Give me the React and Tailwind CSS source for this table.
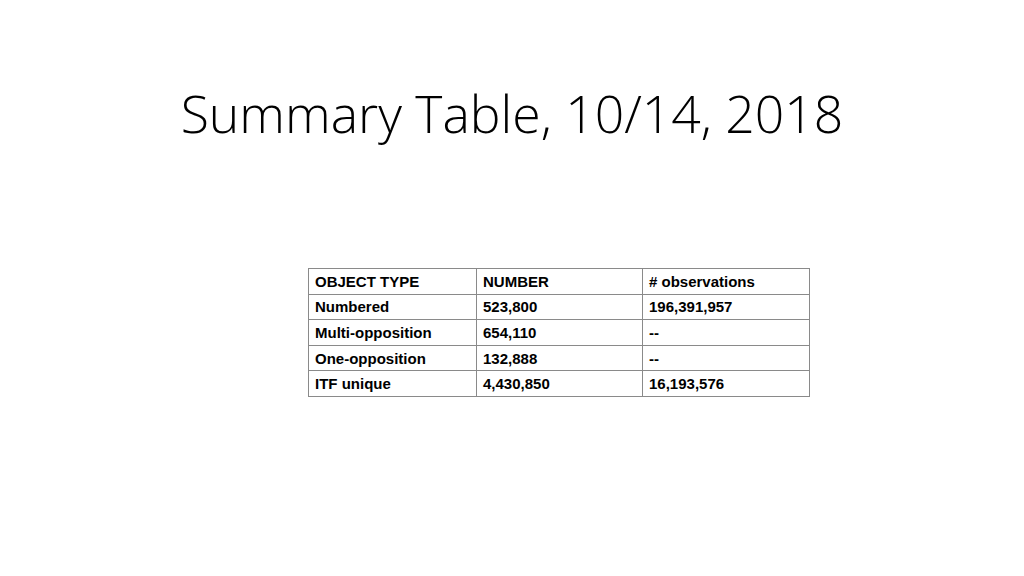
export default function App() {
  const rows = [
    ["OBJECT TYPE", "NUMBER", "# observations"],
    ["Numbered", "523,800", "196,391,957"],
    ["Multi-opposition", "654,110", "--"],
    ["One-opposition", "132,888", "--"],
    ["ITF unique", "4,430,850", "16,193,576"],
  ];
  return (
    <div className="w-[1024px] h-[576px] bg-white flex flex-col overflow-hidden">
      <h1
        className="self-center mt-[78px] text-[51.7px] leading-[70px] text-black font-light whitespace-nowrap"
        style={{ fontFamily: '"Open Sans", "Liberation Sans", sans-serif' }}
      >
        Summary Table, 10/14, 2018
      </h1>
      <table
        className="mt-[120px] ml-[308px] self-start border-collapse text-[15px] leading-[17px] font-bold text-black"
        style={{ fontFamily: '"Liberation Sans", Arial, sans-serif' }}
      >
        <tbody>
          {rows.map((r, i) => (
            <tr key={i} className="h-[25.6px]">
              <td className="w-[168px] border border-[#8a8a8a] px-[6px] py-0 align-middle">{r[0]}</td>
              <td className="w-[166px] border border-[#8a8a8a] px-[6px] py-0 align-middle">{r[1]}</td>
              <td className="w-[167px] border border-[#8a8a8a] px-[6px] py-0 align-middle">{r[2]}</td>
            </tr>
          ))}
        </tbody>
      </table>
    </div>
  );
}
